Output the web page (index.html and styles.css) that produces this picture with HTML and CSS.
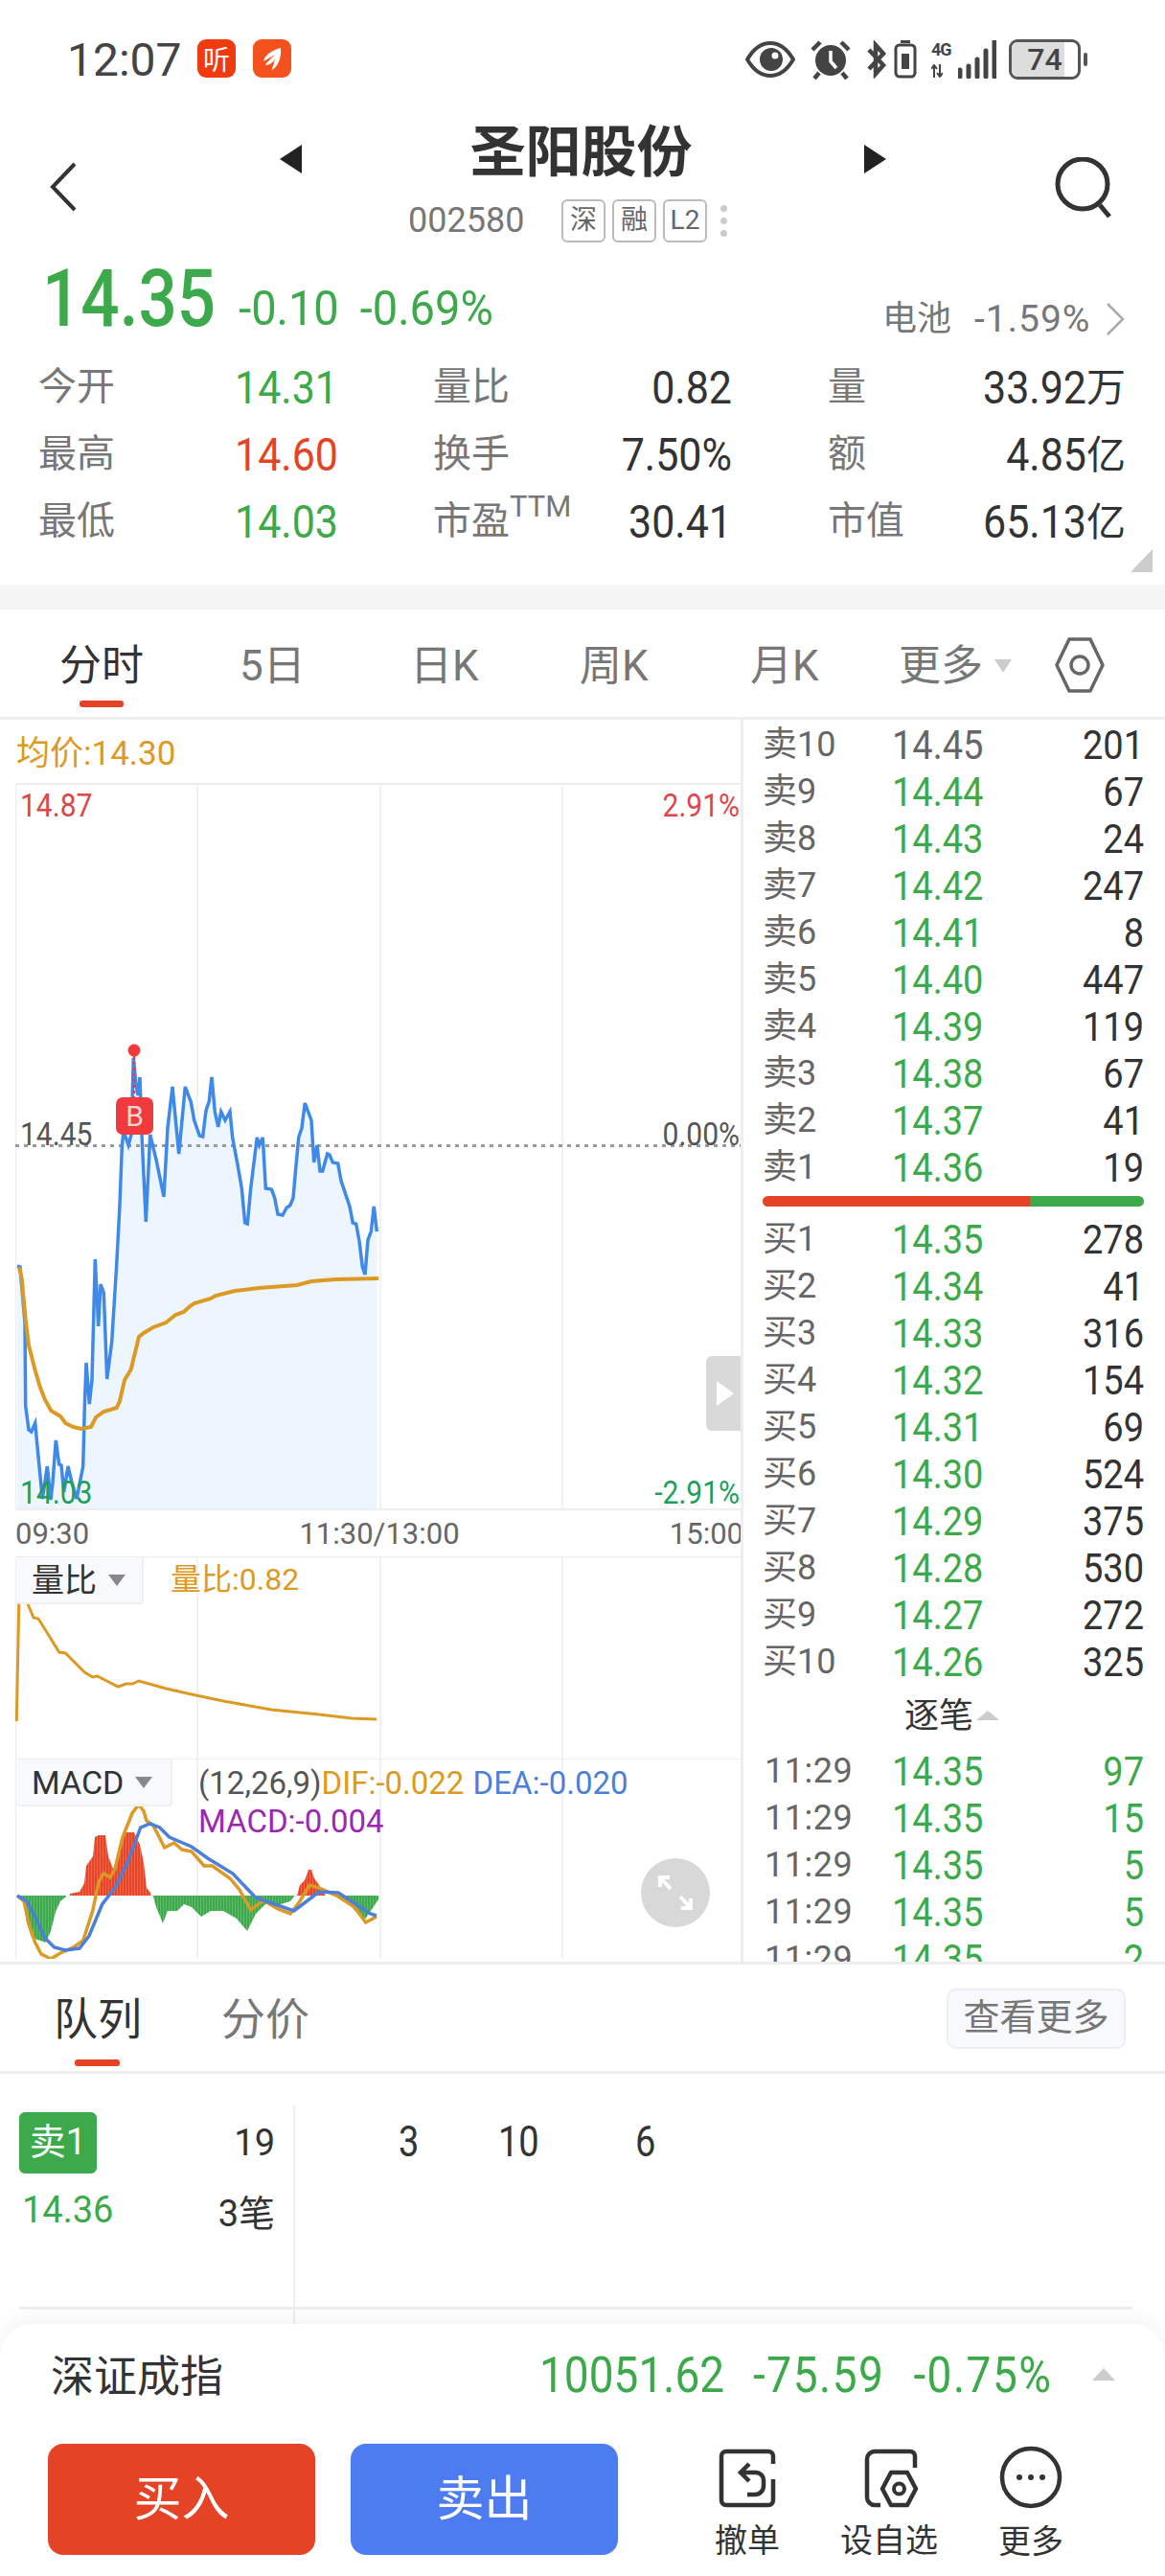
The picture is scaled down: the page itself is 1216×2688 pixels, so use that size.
FILE: index.html
```html
<!DOCTYPE html>
<html lang="zh">
<head>
<meta charset="utf-8">
<title>圣阳股份</title>
<link rel="stylesheet" href="styles.css">
</head>
<body>
<div class="page">

	<!-- 状态栏 -->
	<div class="status">
		<span class="clock">12:07</span>
		<span class="app appTing">听</span>
		<span class="app appFish">
			<svg viewBox="0 0 40 40" width="40" height="40"><path d="M29 9C20 11 12 17 11 23c4-2 8-5 12-7-4 4-9 8-10 11 4 0 8-3 10-6-1 4-3 8-3 11 6-3 10-13 9-23z" fill="#fff"/></svg>
		</span>
		<div class="statusRight">
			<svg viewBox="0 0 52 38" width="52" height="38"><path d="M2 19C9 7 17 2 26 2s17 5 24 17c-7 12-15 17-24 17S9 31 2 19z" fill="none" stroke="#444" stroke-width="4"/><circle cx="27" cy="19" r="12" fill="#444"/><circle cx="31" cy="15" r="3.5" fill="#fff"/></svg>
			<svg class="icoAlarm" viewBox="0 0 42 42" width="42" height="42"><circle cx="21" cy="22" r="16" fill="#444"/><path d="M21 12v11l6 7" fill="none" stroke="#fff" stroke-width="3.5"/><path d="M2 11 10 3M40 11 32 3M9 35l-5 6M33 35l5 6" stroke="#444" stroke-width="4.500"/></svg>
			<svg class="icoBt" viewBox="0 0 22 40" width="22" height="40"><path d="M3 10 18 26l-8 9V5l8 9L3 30" fill="none" stroke="#444" stroke-width="4.500"/></svg>
			<svg class="icoVib" viewBox="0 0 24 40" width="24" height="40"><rect x="2" y="5" width="20" height="33" rx="4" fill="none" stroke="#444" stroke-width="3"/><rect x="7" y="0" width="10" height="3" fill="#444"/><rect x="8" y="14" width="8" height="16" fill="#444"/></svg>
			<div class="net">
				<span class="netTxt">4G</span>
				<svg viewBox="0 0 12 14" width="12" height="14"><path d="M3 14V2M0 5l3-4 3 4M9 0v12M6 9l3 4 3-4" fill="none" stroke="#444" stroke-width="2"/></svg>
			</div>
			<svg class="icoBars" viewBox="0 0 40 40" width="40" height="40"><path d="M2 38v-7M11 38V27M20 38V20M29 38V11M38 38V1" stroke="#444" stroke-width="5" stroke-linecap="round"/></svg>
			<div class="battery"><i class="batteryFill"></i><span class="batteryNum">74</span></div>
			<i class="batteryNub"></i>
		</div>
	</div>

	<!-- 标题 -->
	<div class="head">
		<svg class="back" viewBox="0 0 30 52" width="30" height="52"><path d="M27 2 4 26l23 24" fill="none" stroke="#333" stroke-width="4"/></svg>
		<svg class="prev" viewBox="0 0 24 30" width="24" height="30"><path d="M23 0v30L0 15z" fill="#222"/></svg>
		<div class="headMid">
			<div class="stockName">圣阳股份</div>
			<div class="stockSub">
				<span class="code">002580</span>
				<span class="tag">深</span><span class="tag">融</span><span class="tag">L2</span>
				<span class="dots"><i></i><i></i><i></i></span>
			</div>
		</div>
		<svg class="next" viewBox="0 0 24 30" width="24" height="30"><path d="M1 0v30l23-15z" fill="#222"/></svg>
		<svg class="search" viewBox="0 0 64 64" width="64" height="64"><circle cx="30" cy="28" r="26" fill="none" stroke="#333" stroke-width="5"/><path d="M48 50l10 12" stroke="#333" stroke-width="5"/></svg>
	</div>

	<!-- 现价 -->
	<div class="quote">
		<span class="price">14.35</span>
		<span class="chg">-0.10</span>
		<span class="chg">-0.69%</span>
		<div class="sector">
			<span>电池</span><span class="sectorPct">-1.59%</span>
			<svg viewBox="0 0 20 34" width="20" height="34"><path d="M2 1l16 16L2 33" fill="none" stroke="#aaa" stroke-width="2.500"/></svg>
		</div>
	</div>

	<div class="stats">
		<span class="lab">今开</span><span class="val green"><b>14.31</b></span>
		<span class="lab">量比</span><span class="val right"><b>0.82</b></span>
		<span class="lab labEnd">量</span><span class="val right"><b>33.92</b><em>万</em></span>
		<span class="lab">最高</span><span class="val red"><b>14.60</b></span>
		<span class="lab">换手</span><span class="val right"><b>7.50%</b></span>
		<span class="lab labEnd">额</span><span class="val right"><b>4.85</b><em>亿</em></span>
		<span class="lab">最低</span><span class="val green"><b>14.03</b></span>
		<span class="lab">市盈<sup>TTM</sup></span><span class="val right"><b>30.41</b></span>
		<span class="lab labEnd">市值</span><span class="val right"><b>65.13</b><em>亿</em></span>
		<i class="corner"></i>
	</div>
	<div class="band"></div>

	<!-- 周期切换 -->
	<div class="tabs">
		<span class="tab tab1 active">分时</span>
		<span class="tab tab2">5日</span>
		<span class="tab tab3">日K</span>
		<span class="tab tab4">周K</span>
		<span class="tab tab5">月K</span>
		<span class="tab tab6">更多<i class="caretDown"></i></span>
		<svg class="hexIco" viewBox="0 0 52 60" width="52" height="60"><path d="M15 3h22l13 27-13 27H15L2 30z" fill="none" stroke="#666" stroke-width="3.500" stroke-linejoin="round"/><circle cx="26" cy="30" r="9" fill="none" stroke="#666" stroke-width="3.500"/></svg>
	</div>

	<div class="main">
		<div class="charts">
			<div class="avgRow">均价:14.30</div>

			<div class="plot">
				<svg viewBox="16 820 757 757" width="757" height="757">
					<path d="M206 820V1577M397 820V1577M587 820V1577M16.500 820V1577" stroke="#eee" stroke-width="1.500"/>
					<path d="M16 821H773" stroke="#eee" stroke-width="2"/>
					<polygon class="area" points="18,1577 18,1324 21,1325 26,1383 26.700,1470 30,1495 32.700,1497 36.700,1488 40,1523 44.300,1567 49.300,1533 53,1568 55,1550 58.300,1506 61.700,1531 64,1532 66.700,1560 71,1533 75,1550 80,1567 86.700,1533 88.300,1470 90,1425 93.300,1468 96,1443 99.300,1317 102.700,1387 105,1343 108.300,1352 111.700,1442 116.700,1403 121.700,1323 125,1260 127.300,1200 129,1183 134,1198 137,1187 139.300,1107 141.700,1133 144,1146 146,1127 148,1187 152.300,1278 156.700,1187 163,1213 171,1252 175,1180 180,1137 186.700,1207 193.300,1137 199.300,1153 202.700,1172 208.300,1188 211.700,1189 215,1162 218.300,1152 221,1127 224.300,1163 227.700,1179 230.700,1163 235,1172 240,1163 242.700,1190 248.300,1220 252.300,1243 255.700,1279 258.300,1280 261.700,1243 268.300,1190 270.700,1198 274.300,1190 277.300,1243 283.300,1244 286.700,1253 290,1270 295,1271 299.300,1263 302.700,1261 306,1253 308.300,1227 311.700,1190 315,1180 318.300,1154 325,1172 327.700,1216 331,1198 334,1225 336.700,1225 341.700,1207 344,1208 347.300,1216 352.700,1217 356,1235 365,1262 368.300,1279 371.700,1280 375,1298 378.300,1325 381,1333 384,1297 387.300,1288 390.300,1262 393.300,1288 393.300,1577"/>
					<path d="M16 1198.500H773" stroke="#999" stroke-width="3" stroke-dasharray="4 5"/>
					<polyline class="lnBlue" points="18,1324 21,1325 26,1383 26.700,1470 30,1495 32.700,1497 36.700,1488 40,1523 44.300,1567 49.300,1533 53,1568 55,1550 58.300,1506 61.700,1531 64,1532 66.700,1560 71,1533 75,1550 80,1567 86.700,1533 88.300,1470 90,1425 93.300,1468 96,1443 99.300,1317 102.700,1387 105,1343 108.300,1352 111.700,1442 116.700,1403 121.700,1323 125,1260 127.300,1200 129,1183 134,1198 137,1187 139.300,1107 141.700,1133 144,1146 146,1127 148,1187 152.300,1278 156.700,1187 163,1213 171,1252 175,1180 180,1137 186.700,1207 193.300,1137 199.300,1153 202.700,1172 208.300,1188 211.700,1189 215,1162 218.300,1152 221,1127 224.300,1163 227.700,1179 230.700,1163 235,1172 240,1163 242.700,1190 248.300,1220 252.300,1243 255.700,1279 258.300,1280 261.700,1243 268.300,1190 270.700,1198 274.300,1190 277.300,1243 283.300,1244 286.700,1253 290,1270 295,1271 299.300,1263 302.700,1261 306,1253 308.300,1227 311.700,1190 315,1180 318.300,1154 325,1172 327.700,1216 331,1198 334,1225 336.700,1225 341.700,1207 344,1208 347.300,1216 352.700,1217 356,1235 365,1262 368.300,1279 371.700,1280 375,1298 378.300,1325 381,1333 384,1297 387.300,1288 390.300,1262 393.300,1288"/>
					<polyline class="lnAvg" points="20,1325 22.700,1337 26.700,1380 30,1407 36.700,1433 41.700,1450 46.700,1463 53.300,1475 63.300,1481 68.300,1488 76.700,1492 85,1494 95,1492 100,1482 108.300,1476 121.700,1472 125,1465 130,1443 136.700,1432 145,1398 150,1394 160,1388 173.300,1383 183.300,1375 191.700,1372 198.300,1366 202.500,1363 220,1358 225,1355 245,1350 270,1347 310,1344 325,1340 350,1338 395,1337"/>
					<path d="M140 1099V1150" stroke="#f03a3d" stroke-width="2.500" stroke-dasharray="3 3"/>
					<circle cx="140" cy="1099" r="6.500" fill="#f03a3d"/>
				</svg>
				<span class="mark markHigh">14.87</span>
				<span class="mark markHighPct">2.91%</span>
				<span class="mark markMid">14.45</span>
				<span class="mark markMidPct">0.00%</span>
				<span class="mark markLow">14.03</span>
				<span class="mark markLowPct">-2.91%</span>
				<span class="badgeB">B</span>
				<span class="handle"><i></i></span>
			</div>

			<div class="timeRow"><span>09:30</span><span class="timeMid">11:30/13:00</span><span>15:00</span></div>

			<div class="volPanel">
				<svg viewBox="16 1627 757 211" width="757" height="211">
					<path d="M206 1627V1838M397 1627V1838M587 1627V1838M16.500 1627V1838" stroke="#eee" stroke-width="1.500"/>
					<path d="M16 1627.500H773" stroke="#eee" stroke-width="1.500"/>
					<polyline class="lnVol" points="17.300,1799 20.700,1628 24,1660 28.300,1675 35,1691 40,1692 50,1708 61.700,1727 68.300,1728 88.300,1748 96.700,1753 101.700,1752 123.300,1763 131.700,1760 138.300,1760 145,1757 173.300,1765 200,1771 233,1778 283,1787 333,1792 367,1796 393,1797"/>
				</svg>
				<span class="chip chipVol">量比<i class="caretChip"></i></span>
				<span class="volTxt">量比:0.82</span>
			</div>

			<div class="macdPanel">
				<svg viewBox="16 1838 757 209" width="757" height="209">
					<defs>
						<pattern id="barRed" width="3" height="10" patternUnits="userSpaceOnUse"><rect width="2.800" height="10" fill="#e84425"/></pattern>
						<pattern id="barGreen" width="3" height="10" patternUnits="userSpaceOnUse"><rect width="2.800" height="10" fill="#3ca94a"/></pattern>
					</defs>
					<path d="M206 1838V2047M397 1838V2047M587 1838V2047M16.500 1838V2047" stroke="#eee" stroke-width="1.500"/>
					<path d="M16 1838H773" stroke="#eee" stroke-width="2"/>
					<polygon fill="url(#barGreen)" points="18,1981 24,1983 28,2010 33,2025 48,2030 53,2018 58,1998 63,1987 69,1982 69,1981"/>
					<polygon fill="url(#barRed)" points="73,1981 73,1979 83,1977 88,1968 90,1950 97,1940 99,1920 103,1918 110,1918 113,1940 118,1953 122,1947 127,1923 130,1915 140,1915 146,1928 150,1947 153,1973 157,1978 157,1981"/>
					<polygon fill="url(#barGreen)" points="160,1981 160,1982 163,1993 170,2010 175,1997 185,1997 192,1990 200,1993 210,2003 220,1997 233,1997 247,2005 258,2018 267,2000 277,1990 293,1990 303,1987 307,1982 307,1981"/>
					<polygon fill="url(#barRed)" points="310,1981 313,1970 318,1965 322,1954 325,1954 328,1963 333,1970 337,1977 340,1981"/>
					<polygon fill="url(#barGreen)" points="353,1981 353,1983 367,1993 380,2007 387,1997 395,1985 395,1981"/>
					<polyline class="lnDif" points="18,1981 25,1987 30,2010 36.700,2030 43,2042 53,2047 63,2041 76.700,2035 86.700,2028 96.700,1997 103,1967 108,1958 115,1962 120,1953 128,1920 138,1895 145,1886 150,1893 153,1903 160,1908 171.700,1931 181.700,1926 190,1933 200,1935 213,1950 221.700,1950 240,1963 250,1975 261.700,1996 275,1986 290,1995 303,2000 313,1987 323,1970 333,1973 353,1982 370,1993 381.700,2009 393,2003"/>
					<polyline class="lnDea" points="18,1981 28,1987 36.700,2003 46.700,2025 56.700,2035 68,2038 83,2036 93,2023 106.700,1990 120,1973 133,1947 146.700,1910 156.700,1906 166.700,1910 176.700,1920 200,1930 216.700,1942 243,1958 266.700,1983 286.700,1990 306.700,1997 320,1987 333,1977 353,1978 367,1987 386.700,2000 393,2002"/>
				</svg>
				<span class="chip chipMacd">MACD<i class="caretChip"></i></span>
				<div class="macdTxt">
					<span class="grey">(12,26,9)</span><span class="dif">DIF:-0.022</span> <span class="dea">DEA:-0.020</span><br>
					<span class="macdVal">MACD:-0.004</span>
				</div>
				<span class="expand">
					<svg viewBox="0 0 72 72" width="72" height="72"><path d="M20 30V20H30M20 20l11 12M52 42V52H42M52 52 41 40" fill="none" stroke="#fff" stroke-width="4"/></svg>
				</span>
			</div>
		</div>

		<!-- 五档/十档盘口 -->
		<div class="book">
			<div class="bookList">
				<div class="bRow"><span class="bLab">卖10</span><span class="bPrice flat">14.45</span><span class="bQty">201</span></div>
				<div class="bRow"><span class="bLab">卖9</span><span class="bPrice">14.44</span><span class="bQty">67</span></div>
				<div class="bRow"><span class="bLab">卖8</span><span class="bPrice">14.43</span><span class="bQty">24</span></div>
				<div class="bRow"><span class="bLab">卖7</span><span class="bPrice">14.42</span><span class="bQty">247</span></div>
				<div class="bRow"><span class="bLab">卖6</span><span class="bPrice">14.41</span><span class="bQty">8</span></div>
				<div class="bRow"><span class="bLab">卖5</span><span class="bPrice">14.40</span><span class="bQty">447</span></div>
				<div class="bRow"><span class="bLab">卖4</span><span class="bPrice">14.39</span><span class="bQty">119</span></div>
				<div class="bRow"><span class="bLab">卖3</span><span class="bPrice">14.38</span><span class="bQty">67</span></div>
				<div class="bRow"><span class="bLab">卖2</span><span class="bPrice">14.37</span><span class="bQty">41</span></div>
				<div class="bRow"><span class="bLab">卖1</span><span class="bPrice">14.36</span><span class="bQty">19</span></div>
			</div>
			<div class="ratio"><i class="ratioRed"></i><i class="ratioGreen"></i></div>
			<div class="bookList">
				<div class="bRow"><span class="bLab">买1</span><span class="bPrice">14.35</span><span class="bQty">278</span></div>
				<div class="bRow"><span class="bLab">买2</span><span class="bPrice">14.34</span><span class="bQty">41</span></div>
				<div class="bRow"><span class="bLab">买3</span><span class="bPrice">14.33</span><span class="bQty">316</span></div>
				<div class="bRow"><span class="bLab">买4</span><span class="bPrice">14.32</span><span class="bQty">154</span></div>
				<div class="bRow"><span class="bLab">买5</span><span class="bPrice">14.31</span><span class="bQty">69</span></div>
				<div class="bRow"><span class="bLab">买6</span><span class="bPrice">14.30</span><span class="bQty">524</span></div>
				<div class="bRow"><span class="bLab">买7</span><span class="bPrice">14.29</span><span class="bQty">375</span></div>
				<div class="bRow"><span class="bLab">买8</span><span class="bPrice">14.28</span><span class="bQty">530</span></div>
				<div class="bRow"><span class="bLab">买9</span><span class="bPrice">14.27</span><span class="bQty">272</span></div>
				<div class="bRow"><span class="bLab">买10</span><span class="bPrice">14.26</span><span class="bQty">325</span></div>
			</div>
			<div class="tickHead">逐笔<i class="caretUp"></i></div>
			<div class="bookList">
				<div class="bRow"><span class="bLab tickTime">11:29</span><span class="bPrice">14.35</span><span class="bQty green">97</span></div>
				<div class="bRow"><span class="bLab tickTime">11:29</span><span class="bPrice">14.35</span><span class="bQty green">15</span></div>
				<div class="bRow"><span class="bLab tickTime">11:29</span><span class="bPrice">14.35</span><span class="bQty green">5</span></div>
				<div class="bRow"><span class="bLab tickTime">11:29</span><span class="bPrice">14.35</span><span class="bQty green">5</span></div>
				<div class="bRow"><span class="bLab tickTime">11:29</span><span class="bPrice">14.35</span><span class="bQty green">2</span></div>
			</div>
		</div>
	</div>

	<!-- 买卖队列 -->
	<div class="qTabs">
		<span class="qTab active">队列</span>
		<span class="qTab">分价</span>
		<span class="moreBtn">查看更多</span>
	</div>
	<div class="queue">
		<div class="qLeft">
			<div class="qLine"><span class="qTag">卖1</span><span class="qNum">19</span></div>
			<div class="qLine qLine2"><span class="green">14.36</span><span class="qNum">3笔</span></div>
		</div>
		<div class="qRight"><span class="q1">3</span><span class="q2">10</span><span class="q3">6</span></div>
		<i class="qRule"></i>
	</div>

	<!-- 底部操作区 -->
	<div class="sheet">
		<div class="indexRow">
			<span class="indexName">深证成指</span>
			<span class="indexVals"><span>10051.62</span><span class="wide">-75.59</span><span class="wide">-0.75%</span></span>
			<i class="caretSheet"></i>
		</div>
		<div class="actions">
			<a class="trade buy">买入</a>
			<a class="trade sell">卖出</a>
			<div class="tool tool1">
				<svg viewBox="0 0 62 62" width="62" height="62"><path d="M58 16V8a5 5 0 0 0-5-5H9a5 5 0 0 0-5 5v46a5 5 0 0 0 5 5h44a5 5 0 0 0 5-5V32" fill="none" stroke="#333" stroke-width="4.500"/><path d="M33 16 24 25l9 9M24 25h16a8 8 0 0 1 8 8v6a9 9 0 0 1-9 9h-8" fill="none" stroke="#333" stroke-width="4.500"/></svg>
				<span>撤单</span>
			</div>
			<div class="tool tool2">
				<svg viewBox="0 0 62 62" width="62" height="62"><path d="M58 20V8a5 5 0 0 0-5-5H16a8 8 0 0 0-8 8v40a8 8 0 0 0 8 8h6" fill="none" stroke="#333" stroke-width="4.500"/><path d="M33 25h17l9 17-9 17H33l-9-17z" fill="none" stroke="#333" stroke-width="4.500" stroke-linejoin="round"/><circle cx="41.500" cy="42" r="5.500" fill="none" stroke="#333" stroke-width="4"/></svg>
				<span>设自选</span>
			</div>
			<div class="tool tool3">
				<svg viewBox="0 0 66 66" width="66" height="66"><circle cx="33" cy="33" r="30" fill="none" stroke="#333" stroke-width="4.500"/><circle cx="21" cy="33" r="3" fill="#333"/><circle cx="33" cy="33" r="3" fill="#333"/><circle cx="45" cy="33" r="3" fill="#333"/></svg>
				<span>更多</span>
			</div>
		</div>
	</div>
</div>
</body>
</html>
```
FILE: styles.css
```css
*{
	box-sizing:border-box;
}
html,body{
	margin:0;
	padding:0;
	background:#fff;
}
body{
	font-family:Roboto,"Noto Sans CJK SC",sans-serif;
	color:#333;
}
i{
	display:block;
	font-style:normal;
}
.page{
	width:1216px;
	height:2688px;
	overflow:hidden;
	position:relative;
	background:#fff;
}
.green{
	color:#3ca94a;
}
.red{
	color:#e54326;
}

/* status */
.status{
	height:100px;
	padding:20px 0 0 70px;
	display:flex;
	align-items:flex-start;
}
.clock{
	font-size:48px;
	line-height:44px;
	color:#444;
	margin-top:21px;
	width:136px;
}
.app{
	width:40px;
	height:40px;
	border-radius:9px;
	margin-top:21px;
	margin-right:19px;
	display:flex;
	align-items:center;
	justify-content:center;
	color:#fff;
}
.appTing{
	background:#f23a10;
	font-size:28px;
	margin-right:18px;
}
.appFish{
	background:#f4511e;
}
.statusRight{
	position:absolute;
	left:778px;
	top:41px;
	display:flex;
	align-items:center;
	height:42px;
}
.icoAlarm{
	margin-left:16px;
}
.icoBt{
	margin-left:16px;
}
.icoVib{
	margin-left:7px;
}
.net{
	margin-left:15px;
	width:28px;
	height:40px;
	color:#444;
}
.netTxt{
	display:block;
	font-size:18px;
	line-height:20px;
	font-weight:700;
	letter-spacing:-1px;
}
.net svg{
	display:block;
	margin-top:5px;
}
.icoBars{
	margin-left:0;
	width:40px;
}
.battery{
	margin-left:13px;
	width:75px;
	height:42px;
	border:3px solid #555;
	border-radius:9px;
	position:relative;
	overflow:hidden;
	text-align:center;
}
.batteryFill{
	position:absolute;
	left:0;
	top:0;
	bottom:0;
	width:80%;
	background:#ddd;
}
.batteryNum{
	position:relative;
	font-size:32px;
	line-height:36px;
	font-weight:500;
	color:#444;
}
.batteryNub{
	width:4px;
	height:14px;
	border-radius:2px;
	background:#555;
	margin-left:3px;
}

/* head */
.head{
	height:170px;
	position:relative;
}
.back{
	position:absolute;
	left:51px;
	top:69px;
}
.prev{
	position:absolute;
	left:292px;
	top:51px;
}
.next{
	position:absolute;
	left:901px;
	top:51px;
}
.search{
	position:absolute;
	left:1100px;
	top:64px;
}
.headMid{
	width:1216px;
	padding-top:26px;
	text-align:center;
}
.stockName{
	font-size:58px;
	line-height:66px;
	font-weight:700;
	color:#333;
	margin-left:-3px;
}
.stockSub{
	display:flex;
	align-items:center;
	margin-top:15px;
	padding-left:426px;
	height:46px;
}
.code{
	font-size:36px;
	color:#777;
	width:160px;
	text-align:left;
}
.tag{
	width:46px;
	height:45px;
	border:2px solid #bbb;
	border-radius:6px;
	font-size:28px;
	line-height:40px;
	color:#666;
	text-align:center;
	margin-right:7px;
}
.dots{
	margin-left:7px;
}
.dots i{
	width:7px;
	height:7px;
	border-radius:50%;
	background:#ccc;
	margin:6px 0;
}

/* quote */
.quote{
	height:90px;
	position:relative;
	display:flex;
	align-items:baseline;
	padding-left:44px;
}
.price{
	display:inline-block;
	font-size:71px;
	line-height:90px;
	font-weight:500;
	color:#3ca94a;
	margin-right:24px;
	transform:scaleY(1.18);
	transform-origin:50% 72%;
}
.chg{
	display:inline-block;
	font-size:47px;
	color:#3ca94a;
	margin-right:22px;
	transform:scaleY(1.08);
	transform-origin:50% 75%;
}
.sector{
	position:absolute;
	left:921px;
	top:42px;
	display:flex;
	align-items:center;
	font-size:36px;
	color:#777;
	line-height:42px;
}
.sectorPct{
	margin-left:24px;
	font-size:39px;
	letter-spacing:1px;
}
.sector svg{
	margin-left:16px;
}

/* stats */
.stats{
	height:250px;
	position:relative;
	padding:9px 0 0 40px;
	display:grid;
	grid-template-columns:205px 207px 120px 192px 200px 211px;
	grid-auto-rows:70px;
	align-items:center;
}
.lab{
	font-size:40px;
	color:#777;
	white-space:nowrap;
	line-height:50px;
}
.labEnd{
	margin-left:100px;
}
.lab sup{
	font-size:31px;
	line-height:0;
	vertical-align:18px;
}
.val{
	font-size:43px;
	color:#333;
	line-height:50px;
}
.val b{
	display:inline-block;
	font-weight:400;
	transform:scaleY(1.14);
}
.val em{
	font-style:normal;
	font-size:41px;
}
.val.green{
	color:#3ca94a;
}
.val.red{
	color:#e54326;
}
.val.right{
	text-align:right;
	justify-self:end;
}
.corner{
	position:absolute;
	right:13px;
	bottom:13px;
	width:0;
	height:0;
	border-left:23px solid transparent;
	border-bottom:24px solid #ccc;
}
.band{
	height:26px;
	background:#f5f5f5;
}

/* tabs */
.tabs{
	height:115px;
	position:relative;
	border-bottom:3px solid #eee;
}
.tab{
	position:absolute;
	top:34px;
	font-size:44px;
	line-height:50px;
	color:#777;
}
.tab.active{
	color:#333;
}
.tab.active:after{
	content:"";
	position:absolute;
	left:21px;
	top:61px;
	width:46px;
	height:7px;
	border-radius:3px;
	background:#e54326;
}
.tab1{
	left:62px;
}
.tab2{
	left:250px;
}
.tab3{
	left:428px;
}
.tab4{
	left:605px;
}
.tab5{
	left:783px;
}
.tab6{
	left:938px;
	display:flex;
	align-items:center;
}
.caretDown{
	width:0;
	height:0;
	margin-left:12px;
	border-left:9px solid transparent;
	border-right:9px solid transparent;
	border-top:14px solid #ccc;
}
.hexIco{
	position:absolute;
	left:1101px;
	top:28px;
}

/* chart column */
.main{
	display:flex;
	height:1299px;
	border-bottom:3px solid #eee;
}
.charts{
	width:773px;
	flex:none;
}
.avgRow{
	height:66px;
	padding:16px 0 0 17px;
	font-size:35px;
	line-height:40px;
	color:#dc9a24;
}
.plot,.volPanel,.macdPanel{
	position:relative;
	margin-left:16px;
	width:757px;
}
.plot{
	height:757px;
}
.plot svg,.volPanel svg,.macdPanel svg{
	display:block;
}
.area{
	fill:#edf5fe;
}
.lnBlue{
	fill:none;
	stroke:#3f8ae8;
	stroke-width:3.5px;
}
.lnAvg{
	fill:none;
	stroke:#dc9a24;
	stroke-width:4px;
}
.lnVol{
	fill:none;
	stroke:#dc9a24;
	stroke-width:3px;
}
.lnDif{
	fill:none;
	stroke:#dc9a24;
	stroke-width:3.5px;
}
.lnDea{
	fill:none;
	stroke:#4c7fd9;
	stroke-width:3.5px;
}
.mark{
	position:absolute;
	font-size:30px;
	line-height:30px;
	transform:scaleY(1.08);
}
.markHigh,.markHighPct{
	top:9px;
	color:#e0454a;
}
.markMid,.markMidPct{
	top:352px;
	color:#555;
}
.markLow,.markLowPct{
	top:726px;
	color:#1aa05a;
}
.markHigh,.markMid,.markLow{
	left:5px;
}
.markHighPct,.markMidPct,.markLowPct{
	right:1px;
}
.badgeB{
	position:absolute;
	left:105px;
	top:328px;
	width:39px;
	height:39px;
	border-radius:7px;
	background:#f03a3d;
	color:#fbd5d5;
	font-size:30px;
	line-height:39px;
	text-align:center;
}
.handle{
	position:absolute;
	right:0;
	top:598px;
	width:36px;
	height:78px;
	border-radius:6px 0 0 6px;
	background:#d9d9d9;
}
.handle i{
	position:absolute;
	left:11px;
	top:26px;
	width:0;
	height:0;
	border-top:13px solid transparent;
	border-bottom:13px solid transparent;
	border-left:18px solid #fff;
}
.timeRow{
	height:50px;
	margin-left:16px;
	width:760px;
	border-top:2px solid #eee;
	display:flex;
	justify-content:space-between;
	font-size:31px;
	line-height:50px;
	color:#666;
}
.volPanel{
	height:211px;
}
.macdPanel{
	height:209px;
}
.chip{
	position:absolute;
	left:1px;
	top:1px;
	height:49px;
	background:#f8f9fd;
	border:2px solid #eff0f3;
	border-top:0;
	border-left:0;
	border-radius:0 0 4px 4px;
	font-size:34px;
	line-height:46px;
	color:#333;
	padding-left:16px;
	display:flex;
	align-items:center;
}
.chipVol{
	width:133px;
}
.chipMacd{
	width:163px;
}
.caretChip{
	width:0;
	height:0;
	margin-left:12px;
	border-left:9px solid transparent;
	border-right:9px solid transparent;
	border-top:12px solid #888;
}
.volTxt{
	position:absolute;
	left:162px;
	top:4px;
	font-size:32px;
	line-height:40px;
	color:#dc9a24;
}
.macdTxt{
	position:absolute;
	left:191px;
	top:6px;
	width:560px;
	font-size:33px;
	line-height:40px;
	white-space:nowrap;
}
.grey{
	color:#555;
}
.dif{
	color:#dc9a24;
}
.dea{
	color:#4c7fd9;
	margin-left:1px;
}
.macdVal{
	color:#9c27b0;
}
.expand{
	position:absolute;
	left:653px;
	top:104px;
	width:72px;
	height:72px;
	border-radius:50%;
	background:#d8d8d8;
}
.expand svg{
	display:block;
}

/* order book */
.book{
	flex:1;
	height:1296px;
	overflow:hidden;
	border-left:3px solid #eee;
	padding:0 22px 0 20px;
}
.bookList:first-child{
	margin-top:-1px;
}
.bRow{
	display:grid;
	grid-template-columns:135px 100px 1fr;
	height:49px;
	line-height:54px;
	font-size:38px;
}
.bLab{
	color:#666;
	font-size:36px;
}
.tickTime{
	font-size:36px;
	letter-spacing:.5px;
	padding-left:2px;
}
.bPrice{
	color:#3ca94a;
	transform:scaleY(1.14);
}
.bPrice.flat{
	color:#666;
}
.bQty{
	text-align:right;
	color:#333;
	transform:scaleY(1.14);
}
.bQty.green{
	color:#3ca94a;
}
.ratio{
	height:26px;
	padding-top:8px;
	display:flex;
}
.ratio i{
	height:11px;
}
.ratioRed{
	width:279px;
	background:#e54326;
	border-radius:6px 0 0 6px;
}
.ratioGreen{
	flex:1;
	background:#3ca94a;
	border-radius:0 6px 6px 0;
}
.tickHead{
	height:65px;
	padding:15px 0 0 148px;
	font-size:36px;
	line-height:40px;
	color:#333;
	display:flex;
}
.caretUp{
	width:0;
	height:0;
	margin:14px 0 0 3px;
	border-left:12px solid transparent;
	border-right:12px solid transparent;
	border-bottom:10px solid #ccc;
}

/* queue */
.qTabs{
	height:114px;
	position:relative;
	border-bottom:3px solid #eee;
	display:flex;
	padding:27px 0 0 56px;
}
.qTab{
	position:relative;
	font-size:46px;
	line-height:60px;
	color:#777;
	margin-right:83px;
}
.qTab.active{
	color:#333;
}
.qTab.active:after{
	content:"";
	position:absolute;
	left:22px;
	top:72px;
	width:47px;
	height:7px;
	border-radius:3px;
	background:#e54326;
}
.moreBtn{
	position:absolute;
	left:988px;
	top:25px;
	width:187px;
	height:63px;
	background:#f8f9fd;
	border:2px solid #eceef1;
	border-radius:10px;
	font-size:38px;
	line-height:57px;
	color:#777;
	text-align:center;
}
.queue{
	height:261px;
	position:relative;
	display:flex;
}
.qLeft{
	width:308px;
	height:261px;
	margin-top:33px;
	padding:0 21px 0 20px;
}
.queue:before{
	content:"";
	position:absolute;
	left:306px;
	top:33px;
	bottom:0;
	width:2px;
	background:#eee;
}
.qLine{
	display:flex;
	justify-content:space-between;
	align-items:center;
	height:64px;
	margin-top:7px;
}
.qLine2{
	margin-top:6px;
	padding-left:3px;
	font-size:38px;
}
.qTag{
	width:81px;
	height:64px;
	background:#3ca94a;
	border-radius:6px;
	color:#fff;
	font-size:38px;
	line-height:62px;
	text-align:center;
}
.qNum{
	font-size:38px;
	color:#333;
}
.qRight{
	position:relative;
	flex:1;
	font-size:38px;
	color:#333;
}
.qRight span{
	position:absolute;
	top:46px;
	line-height:50px;
	transform:scaleY(1.15);
}
.q1{
	left:108px;
}
.q2{
	left:212px;
}
.q3{
	left:355px;
}
.qRule{
	position:absolute;
	left:20px;
	top:243px;
	width:1162px;
	height:3px;
	background:#eee;
}

/* bottom sheet */
.sheet{
	height:263px;
	position:relative;
	background:#fff;
	border-radius:34px 34px 0 0;
	box-shadow:0 -8px 16px rgba(0,0,0,.04);
}
.indexRow{
	height:125px;
	position:relative;
	display:flex;
	align-items:center;
	padding:0 0 22px 53px;
}
.indexName{
	font-size:45px;
	color:#333;
}
.indexVals{
	position:absolute;
	left:563px;
	top:26px;
	display:flex;
	font-size:46px;
	line-height:54px;
	color:#3ca94a;
}
.indexVals span{
	margin-right:30px;
	transform:scaleY(1.12);
}
.indexVals .wide{
	letter-spacing:1.5px;
}
.caretSheet{
	position:absolute;
	left:1140px;
	top:46px;
	width:0;
	height:0;
	border-left:12px solid transparent;
	border-right:12px solid transparent;
	border-bottom:13px solid #ccc;
}
.actions{
	position:relative;
	height:138px;
}
.trade{
	position:absolute;
	top:0;
	width:279px;
	height:116px;
	border-radius:16px;
	color:#fff;
	font-size:50px;
	line-height:116px;
	text-align:center;
}
.buy{
	left:50px;
	background:#e54326;
}
.sell{
	left:366px;
	background:#4c7cf0;
}
.tool{
	position:absolute;
	top:5px;
	width:120px;
	text-align:center;
	font-size:34px;
	line-height:40px;
	color:#333;
}
.tool svg{
	display:block;
	margin:0 auto 14px;
}
.tool1{
	left:720px;
}
.tool2{
	left:868px;
}
.tool3{
	left:1016px;
	top:2px;
}
```
